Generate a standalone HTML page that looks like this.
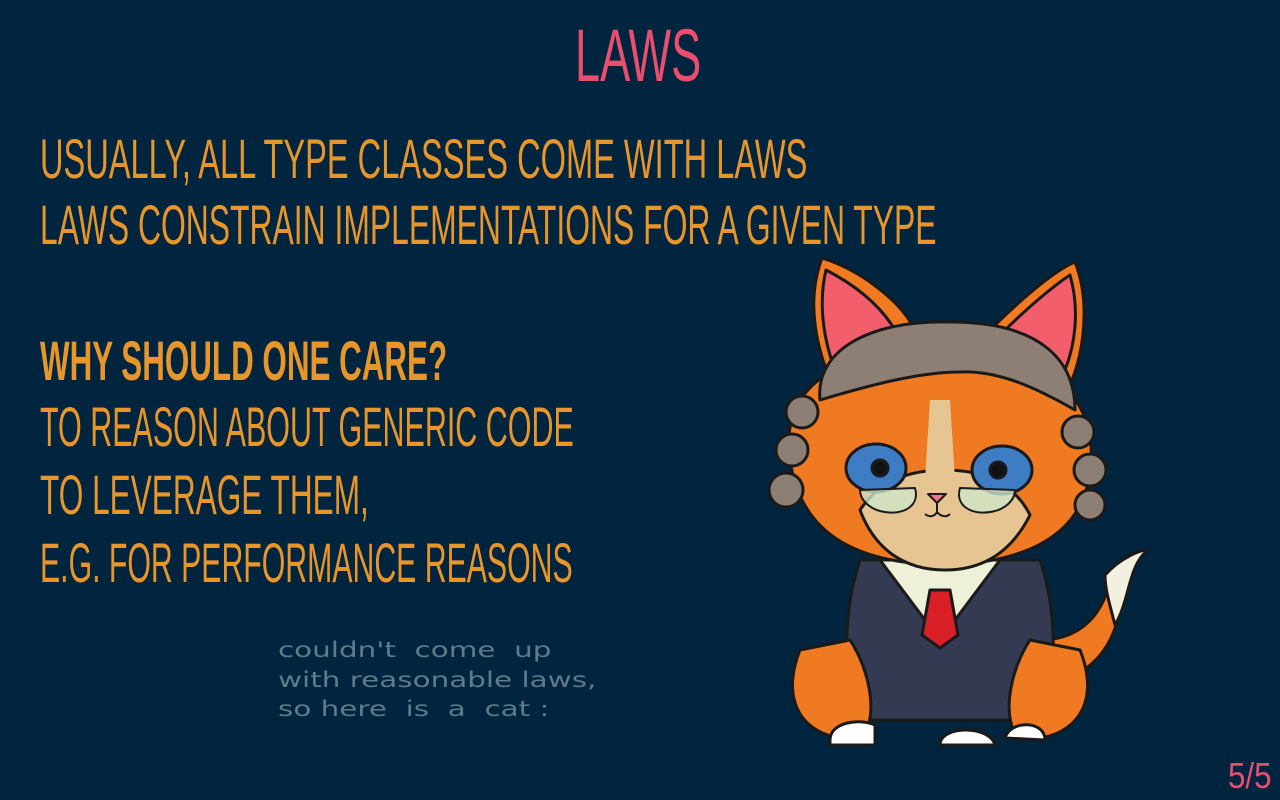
<!DOCTYPE html>
<html><head><meta charset="utf-8"><style>
html,body{margin:0;padding:0;}
body{width:1280px;height:800px;background:#02253f;position:relative;overflow:hidden;font-family:"Liberation Sans",sans-serif;}
.t{position:absolute;white-space:nowrap;transform-origin:0 0;color:#e8952a;font-size:56px;line-height:56px;}
.title{color:#e94e6f;font-size:74px;line-height:74px;}
.hw{position:absolute;color:#5f7b89;font-family:"DejaVu Sans",sans-serif;font-size:21px;white-space:pre;left:278px;transform-origin:0 0;transform:scaleX(1.4);}
</style></head><body>
<div class="t title" style="left:575px;top:19px;transform:scaleX(0.61)">LAWS</div>
<div class="t" style="left:40px;top:131px;transform:scaleX(0.582)">USUALLY, ALL TYPE CLASSES COME WITH LAWS</div>
<div class="t" style="left:40px;top:197px;transform:scaleX(0.569)">LAWS CONSTRAIN IMPLEMENTATIONS FOR A GIVEN TYPE</div>
<div class="t" style="left:40px;top:333px;font-weight:bold;transform:scaleX(0.56)">WHY SHOULD ONE CARE?</div>
<div class="t" style="left:40px;top:399px;transform:scaleX(0.544)">TO REASON ABOUT GENERIC CODE</div>
<div class="t" style="left:40px;top:467px;transform:scaleX(0.564)">TO LEVERAGE THEM,</div>
<div class="t" style="left:40px;top:535px;transform:scaleX(0.54)">E.G. FOR PERFORMANCE REASONS</div>
<div class="hw" style="top:638px">couldn't  come  up</div>
<div class="hw" style="top:668px">with reasonable laws,</div>
<div class="hw" style="top:697px">so here  is  a  cat :</div>
<div class="t" style="left:1228px;top:758px;color:#e94e6f;font-size:36px;line-height:36px;transform:scaleX(0.87)">5/5</div>
<svg style="position:absolute;left:0;top:0" width="1280" height="800" viewBox="0 0 1280 800">
<g stroke="#1a1a1a" stroke-width="3" stroke-linejoin="round">
<path d="M1040 640 C1090 640 1110 600 1110 570 C1125 555 1140 550 1148 550 C1120 560 1130 600 1110 640 C1095 670 1060 690 1030 680 Z" fill="#f07a22"/>
<path d="M1105 575 C1120 558 1140 550 1148 550 C1128 565 1130 600 1115 625 C1110 605 1105 590 1105 575Z" fill="#f3f0df"/>
<path d="M830 380 C810 330 810 290 822 258 C860 270 900 300 915 330 Z" fill="#f07a22"/>
<path d="M835 370 C820 330 820 295 826 270 C855 285 880 305 895 330 Z" fill="#f35e6c"/>
<path d="M990 330 C1020 300 1055 270 1075 262 C1090 300 1085 350 1070 385 Z" fill="#f07a22"/>
<path d="M1000 335 C1030 305 1055 285 1070 275 C1080 310 1075 345 1065 370 Z" fill="#f35e6c"/>
<path d="M860 560 C840 620 845 690 860 720 L1040 720 C1055 690 1060 620 1040 560 Z" fill="#343a52"/>
<path d="M880 560 L940 640 L1000 560 Z" fill="#eef0d8"/>
<path d="M930 590 L950 590 L958 635 L940 648 L922 635 Z" fill="#d81f26"/>
<path d="M800 650 C780 700 800 740 860 740 C880 720 870 670 850 640 Z" fill="#f07a22"/>
<path d="M1080 650 C1100 700 1080 740 1020 740 C1000 720 1010 670 1030 640 Z" fill="#f07a22"/>
<path d="M830 740 C830 722 860 718 875 725 L875 745 L830 745Z" fill="#fff"/>
<path d="M940 745 C940 725 990 725 995 745 Z" fill="#fff"/>
<path d="M1005 738 C1010 720 1045 720 1045 740 Z" fill="#fff"/>
<path d="M790 460 C780 390 830 350 945 348 C1050 350 1100 400 1090 470 C1085 520 1050 560 950 565 C850 565 800 530 790 460 Z" fill="#f07a22"/>
<path d="M860 510 C880 480 910 470 945 470 C985 470 1015 485 1030 515 C1010 555 980 570 945 570 C905 570 875 550 860 510Z" fill="#e6c592"/>
<path d="M930 400 L950 400 L955 480 L925 480Z" fill="#e6c592" stroke="none"/>
<path d="M820 400 C815 350 870 320 950 322 C1040 322 1075 360 1075 410 C1040 390 1000 370 960 372 C920 372 870 385 820 400 Z" fill="#8d7f73"/>
<g fill="#8d7f73">
<circle cx="802" cy="412" r="16"/><circle cx="792" cy="450" r="16"/><circle cx="786" cy="490" r="17"/>
<circle cx="1078" cy="432" r="16"/><circle cx="1090" cy="470" r="16"/><circle cx="1090" cy="505" r="15"/>
</g>
<ellipse cx="876" cy="468" rx="30" ry="24" fill="#3e7cc4"/>
<ellipse cx="1002" cy="470" rx="30" ry="24" fill="#3e7cc4"/>
<circle cx="880" cy="468" r="8" fill="#111"/><circle cx="998" cy="470" r="8" fill="#111"/>
<path d="M860 490 L915 488 C920 505 905 515 885 512 C870 510 860 500 860 490Z" fill="#cfe6c8" fill-opacity="0.8" stroke-width="2"/>
<path d="M960 488 L1015 490 C1015 500 1005 510 990 512 C970 515 955 505 960 488Z" fill="#cfe6c8" fill-opacity="0.8" stroke-width="2"/>
<path d="M928 494 L946 494 L937 503Z" fill="#f3748a" stroke-width="2"/>
<path d="M937 503 L937 512 M925 514 C930 518 935 516 937 512 C940 516 946 518 950 514" fill="none" stroke-width="2"/>
</g>
</svg>
</body></html>
